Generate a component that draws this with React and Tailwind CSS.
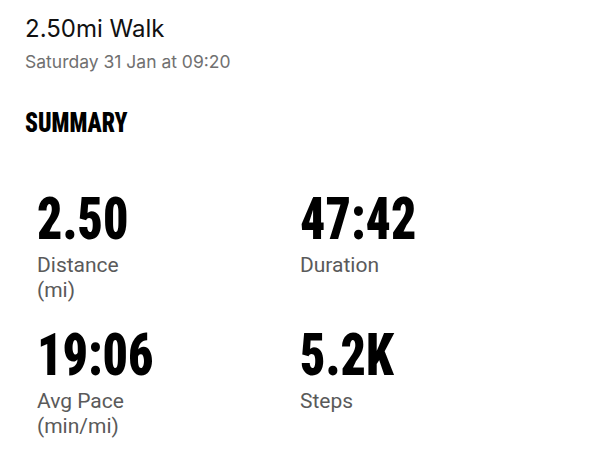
const stats = [
  { value: "2.50", label: ["Distance", "(mi)"] },
  { value: "47:42", label: ["Duration"] },
  { value: "19:06", label: ["Avg Pace", "(min/mi)"] },
  { value: "5.2K", label: ["Steps"] },
];

const Stat = ({ value, label }) => (
  <div className="flex flex-col">
    <div className="h-[60px] leading-[60px] text-[60px] font-black text-black font-['Roboto',sans-serif] [font-stretch:condensed] scale-x-[0.83] origin-left whitespace-nowrap">
      {value}
    </div>
    <div className="mt-[4px] text-[21px] leading-[25px] text-[#5a5a5a] font-['Roboto',sans-serif]">
      {label.map((l) => (
        <div key={l}>{l}</div>
      ))}
    </div>
  </div>
);

export default function App() {
  return (
    <div className="w-[600px] h-[450px] bg-white overflow-hidden pl-[25px] pt-[14px]">
      <div className="text-[24px] leading-[30px] text-[#111] font-['Inter',sans-serif]">
        2.50mi Walk
      </div>
      <div className="mt-[6px] text-[17.5px] leading-[24px] text-[#707070] font-['Inter',sans-serif]">
        Saturday 31 Jan at 09:20
      </div>
      <div className="mt-[32px] text-[28px] leading-[34px] font-black text-black font-['Roboto',sans-serif] [font-stretch:condensed] scale-x-[0.84] origin-left">
        SUMMARY
      </div>

      <div className="mt-[49px] pl-[12px] grid grid-cols-[263px_1fr] gap-y-[22px]">
        {stats.map((s) => (
          <Stat key={s.value} {...s} />
        ))}
      </div>
    </div>
  );
}
